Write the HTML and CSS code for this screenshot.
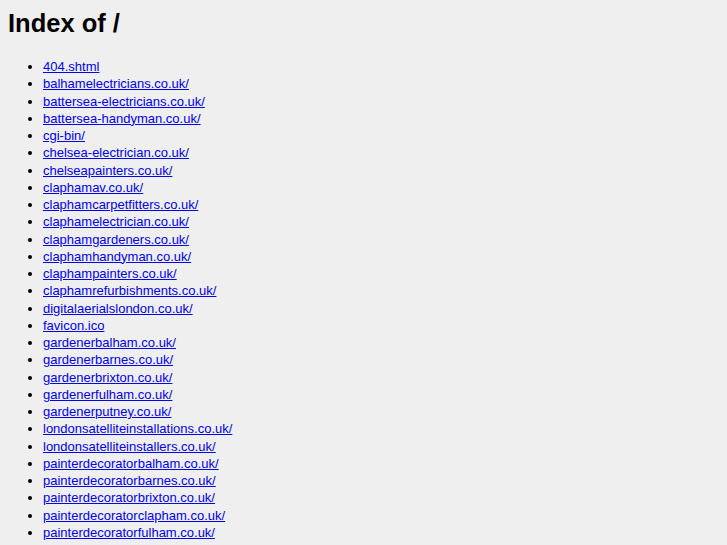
FILE: index.html
```html
<!DOCTYPE html>
<html lang="en">
<head>
  <meta charset="UTF-8" />
  <title>Index of /</title>
  <link rel="stylesheet" href="styles.css">
</head>
<body>
  <h1>Index of /</h1>
  <ul class="listing">
    <li><a href="#">404.shtml</a></li>
    <li><a href="#">balhamelectricians.co.uk/</a></li>
    <li><a href="#">battersea-electricians.co.uk/</a></li>
    <li><a href="#">battersea-handyman.co.uk/</a></li>
    <li><a href="#">cgi-bin/</a></li>
    <li><a href="#">chelsea-electrician.co.uk/</a></li>
    <li><a href="#">chelseapainters.co.uk/</a></li>
    <li><a href="#">claphamav.co.uk/</a></li>
    <li><a href="#">claphamcarpetfitters.co.uk/</a></li>
    <li><a href="#">claphamelectrician.co.uk/</a></li>
    <li><a href="#">claphamgardeners.co.uk/</a></li>
    <li><a href="#">claphamhandyman.co.uk/</a></li>
    <li><a href="#">claphampainters.co.uk/</a></li>
    <li><a href="#">claphamrefurbishments.co.uk/</a></li>
    <li><a href="#">digitalaerialslondon.co.uk/</a></li>
    <li><a href="#">favicon.ico</a></li>
    <li><a href="#">gardenerbalham.co.uk/</a></li>
    <li><a href="#">gardenerbarnes.co.uk/</a></li>
    <li><a href="#">gardenerbrixton.co.uk/</a></li>
    <li><a href="#">gardenerfulham.co.uk/</a></li>
    <li><a href="#">gardenerputney.co.uk/</a></li>
    <li><a href="#">londonsatelliteinstallations.co.uk/</a></li>
    <li><a href="#">londonsatelliteinstallers.co.uk/</a></li>
    <li><a href="#">painterdecoratorbalham.co.uk/</a></li>
    <li><a href="#">painterdecoratorbarnes.co.uk/</a></li>
    <li><a href="#">painterdecoratorbrixton.co.uk/</a></li>
    <li><a href="#">painterdecoratorclapham.co.uk/</a></li>
    <li><a href="#">painterdecoratorfulham.co.uk/</a></li>
  </ul>
</body>
</html>
```

FILE: styles.css
```css
body {
  margin: 8px;
  background: #efefef;
  color: #000;
  font-family: 'Liberation Sans', Arial, sans-serif;
  font-size: 13px;
}

h1 {
  font-size: 25.5px;
  margin: 1px 0 20px;
}

.listing {
  margin: 0;
  padding-left: 35px;
}

.listing li {
  line-height: 17.25px;
}

.listing a {
  color: #0000ee;
}
```
